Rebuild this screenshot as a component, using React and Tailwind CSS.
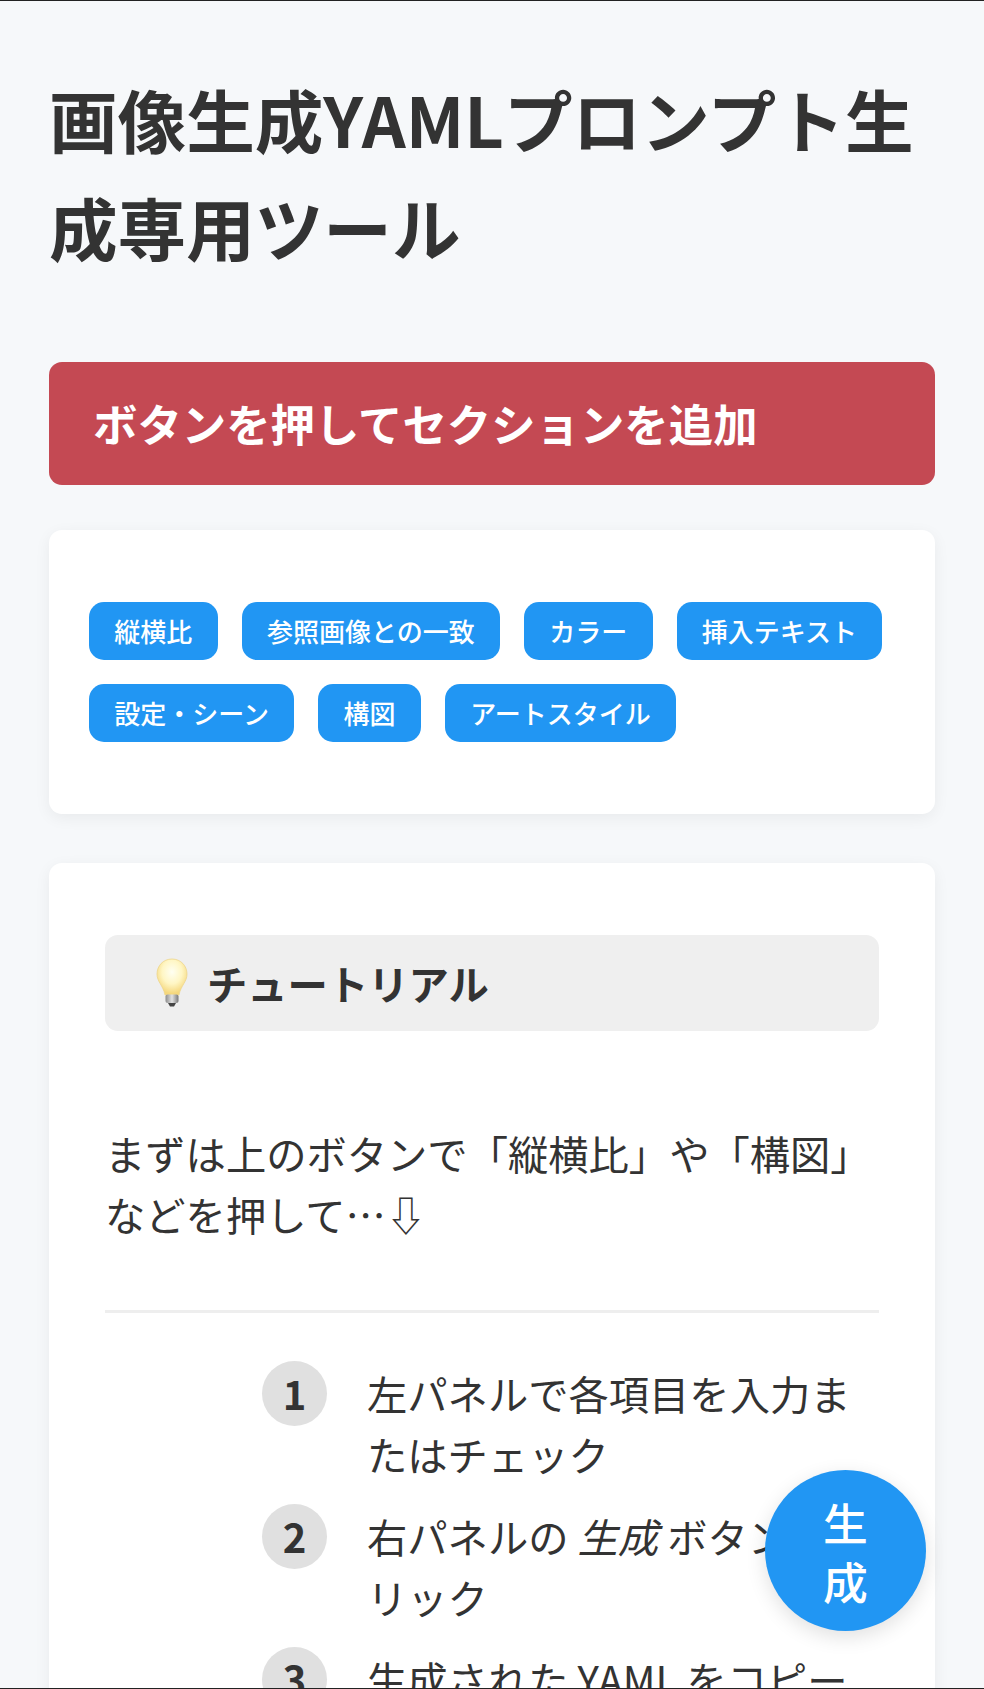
const font = { fontFamily: '"Noto Sans CJK JP", "Noto Sans", sans-serif' };

function Bulb() {
  return (
    <svg width="34" height="50" viewBox="0 0 34 50" className="shrink-0">
      <defs>
        <radialGradient id="g" cx="50%" cy="36%" r="60%">
          <stop offset="0%" stopColor="#fffff2" />
          <stop offset="55%" stopColor="#fff6c4" />
          <stop offset="100%" stopColor="#f5d77c" />
        </radialGradient>
        <linearGradient id="b" x1="0" x2="1" y1="0" y2="0">
          <stop offset="0%" stopColor="#8d8d8d" />
          <stop offset="50%" stopColor="#e2e2e2" />
          <stop offset="100%" stopColor="#777777" />
        </linearGradient>
      </defs>
      <path d="M17 1C8 1 2 8 2 16c0 8 6 11 8 21h14c2-10 8-13 8-21C32 8 26 1 17 1Z" fill="url(#g)" stroke="#eed68c" strokeWidth="0.8" />
      <rect x="10.5" y="36.5" width="13" height="8.5" rx="2" fill="url(#b)" />
      <path d="M13 45h8l-2 3.5h-4Z" fill="#444444" />
    </svg>
  );
}

function Chip({ children }) {
  return (
    <span className="inline-flex h-[58px] items-center rounded-[15px] bg-[#2196f3] px-[25.3px] text-[26px] leading-none font-medium text-white">
      {children}
    </span>
  );
}

function Step({ n, children }) {
  return (
    <li className="mb-[20px] flex">
      <span className="mt-[-1px] mr-[40px] flex h-[65px] w-[65px] shrink-0 items-center justify-center rounded-full bg-[#e0e0e0] text-[40px] font-bold text-[#333333]">
        {n}
      </span>
      <span className="min-w-0">{children}</span>
    </li>
  );
}

export default function App() {
  return (
    <div style={font} className="relative h-[1689px] overflow-hidden border-y border-[#222222] bg-[#f6f8fa] text-[#333333]">
      <div className="px-[49px] pt-[63px]">
        <h1 className="m-0 text-[68.6px] leading-[108px] font-bold">画像生成YAMLプロンプト生成専用ツール</h1>

        <div className="mt-[82px] flex h-[123px] items-center rounded-[13px] bg-[#c44953] px-[44px] text-[44.4px] font-bold text-white">
          ボタンを押してセクションを追加
        </div>

        <div className="mt-[45px] rounded-[13px] bg-white px-[40px] pt-[72px] pb-[72px] shadow-[0_4px_16px_rgba(0,0,0,0.06)]">
          <div className="flex flex-wrap gap-x-[24px] gap-y-[24px]">
            {['縦横比', '参照画像との一致', 'カラー', '挿入テキスト', '設定・シーン', '構図', 'アートスタイル'].map((t) => (
              <Chip key={t}>{t}</Chip>
            ))}
          </div>
        </div>

        <div className="mt-[49px] rounded-[13px] bg-white px-[56px] pt-[72px] pb-[200px] shadow-[0_4px_16px_rgba(0,0,0,0.06)]">
          <div className="flex h-[96px] items-center rounded-[13px] bg-[#efefef] pl-[50px] text-[40.3px] font-bold">
            <Bulb />
            <span className="ml-[18px]">チュートリアル</span>
          </div>

          <p className="mt-[91px] text-[40.3px] leading-[61px]">
            まずは上のボタンで「縦横比」や「構図」などを押して…⇩
          </p>

          <hr className="mt-[66px] border-0 border-t-[3px] border-[#eeeeee]" />

          <ol className="mt-[49px] ml-[157px] list-none text-[40.3px] leading-[61.4px]">
            <Step n="1">左パネルで各項目を入力またはチェック</Step>
            <Step n="2">
              右パネルの <em>生成</em> ボタンをクリック
            </Step>
            <Step n="3">生成された YAML をコピー</Step>
          </ol>
        </div>
      </div>

      <button className="absolute top-[1469px] right-[58px] flex h-[161px] w-[161px] items-center justify-center rounded-full bg-[#2196f3] px-[40px] text-[44.8px] leading-[59px] font-medium text-white shadow-[0_6px_20px_rgba(0,0,0,0.12)]">
        生成
      </button>
    </div>
  );
}
